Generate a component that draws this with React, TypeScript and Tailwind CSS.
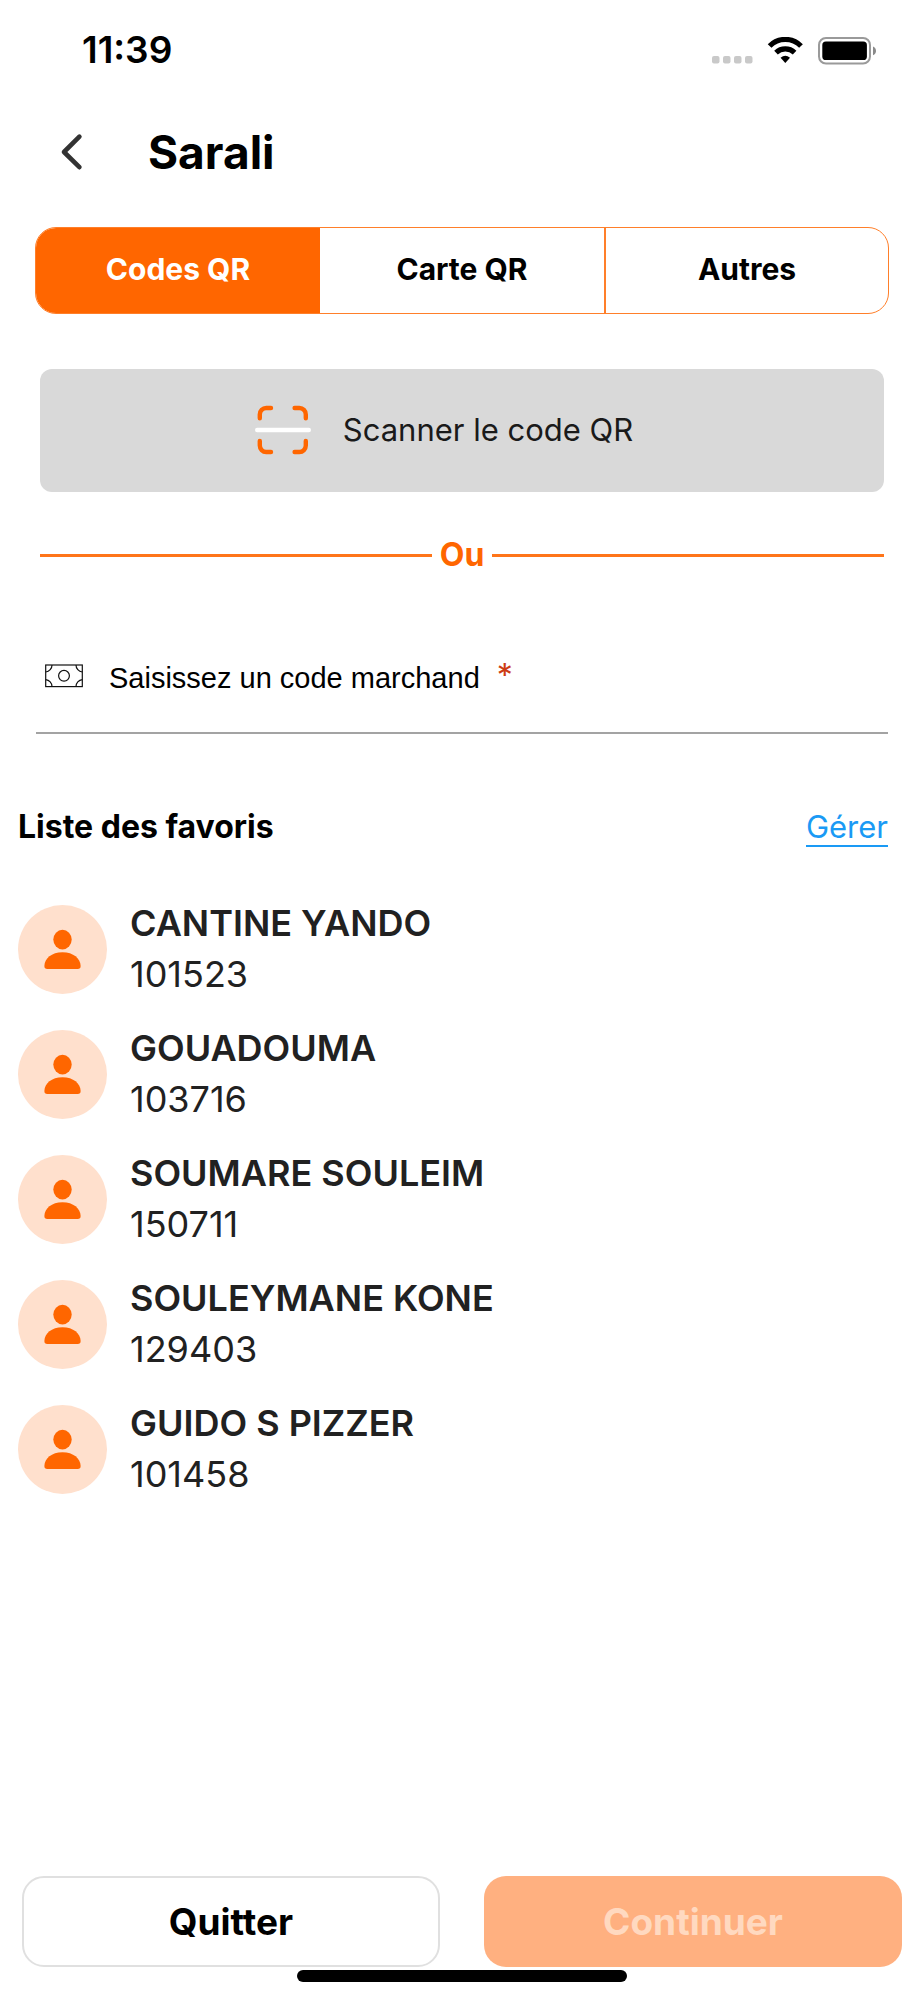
import React, { useState } from "react";

const tabs = ["Codes QR", "Carte QR", "Autres"];

const favorites = [
  { name: "CANTINE YANDO", code: "101523" },
  { name: "GOUADOUMA", code: "103716" },
  { name: "SOUMARE SOULEIM", code: "150711" },
  { name: "SOULEYMANE KONE", code: "129403" },
  { name: "GUIDO S PIZZER", code: "101458" },
];

const StatusBar: React.FC = () => (
  <div className="flex h-[100px] items-center justify-between pl-[82px] pr-12">
    <span className="text-[37px] leading-10 font-semibold">11:39</span>
    <div className="flex items-center pt-[2px]">
      <svg width="164" height="28" viewBox="0 0 164 28" aria-hidden="true">
        <g fill="#c9c9c9">
          <rect x="0" y="19" width="7.5" height="7.5" rx="2" />
          <rect x="11" y="19" width="7.5" height="7.5" rx="2" />
          <rect x="22" y="19" width="7.5" height="7.5" rx="2" />
          <rect x="33" y="19" width="7.5" height="7.5" rx="2" />
        </g>
        <g fill="none" stroke="#000" strokeWidth="5.2">
          <path d="M57.6 9 A22 22 0 0 1 89 9" />
          <path d="M64 15.6 A13.4 13.4 0 0 1 82.6 15.6" />
        </g>
        <path d="M68.6 20.8 A7.4 7.4 0 0 1 78 20.8 L73.3 26 Z" fill="#000" />
        <rect x="107" y="1" width="51" height="25.5" rx="7" fill="none" stroke="#9a9a9a" strokeWidth="2" />
        <rect x="110.3" y="4.4" width="44.6" height="18.6" rx="3.6" fill="#000" />
        <path d="M161 9.6 C165 11.4 165 16.4 161 18.2 Z" fill="#8a8a8a" />
      </svg>
    </div>
  </div>
);

const ScanIcon: React.FC = () => (
  <svg width="56" height="50" viewBox="0 0 56 50" fill="none" strokeWidth="4.4" strokeLinecap="round" aria-hidden="true">
    <g stroke="#ff6600">
      <path d="M4.8 13.2 V9.4 A6.4 6.4 0 0 1 11.2 3 H16" />
      <path d="M39.6 3 H44.4 A6.4 6.4 0 0 1 50.8 9.4 V13.2" />
      <path d="M4.8 36 V40.6 A6.4 6.4 0 0 0 11.2 47 H16" />
      <path d="M39.6 47 H44.4 A6.4 6.4 0 0 0 50.8 40.6 V36" />
    </g>
    <path d="M2.2 25 H53.8" stroke="#fff" />
  </svg>
);

const MoneyIcon: React.FC = () => (
  <svg width="38" height="24" viewBox="0 0 38 24" fill="none" stroke="#111" strokeWidth="1.2" aria-hidden="true">
    <rect x="0.7" y="1" width="36.6" height="21.6" />
    <circle cx="19" cy="11.8" r="5.4" />
    <path d="M7 1 A7 7 0 0 1 0.7 8 M31 1 A7 7 0 0 0 37.3 8 M7 22.6 A7 7 0 0 0 0.7 15.6 M31 22.6 A7 7 0 0 1 37.3 15.6" />
  </svg>
);

const Avatar: React.FC = () => (
  <svg className="shrink-0" width="89" height="89" viewBox="0 0 89 89" aria-hidden="true">
    <circle cx="44.5" cy="44.5" r="44.5" fill="#ffe0cd" />
    <ellipse cx="44.5" cy="34.6" rx="9.2" ry="9.8" fill="#ff6600" />
    <path
      d="M26.4 61 C26.4 53.6 33.6 47.2 44.5 47.2 S62.6 53.6 62.6 61 C62.6 63.2 61.6 64 59.8 64 H29.2 C27.4 64 26.4 63.2 26.4 61 Z"
      fill="#ff6600"
    />
  </svg>
);

const App: React.FC = () => {
  const [activeTab, setActiveTab] = useState("Codes QR");
  const [code, setCode] = useState("");

  return (
    <div className="flex min-h-screen flex-col bg-white font-['Inter',sans-serif] text-black">
      <StatusBar />

      {/* Header */}
      <header className="flex h-[104px] items-center pl-[56px]">
        <button type="button" aria-label="Retour" className="flex w-[92px] items-center">
          <svg width="32" height="40" viewBox="0 0 32 40" fill="none" stroke="#333" strokeWidth="4.6" strokeLinecap="round" strokeLinejoin="round">
            <path d="M23.4 4.6 L8 20 L23.4 35.2" />
          </svg>
        </button>
        <h1 className="text-[46px] leading-[52px] font-bold">Sarali</h1>
      </header>

      {/* Tabs */}
      <div className="px-[35px] pt-[23px]">
        <div role="tablist" className="grid h-[87px] grid-cols-3 overflow-hidden rounded-[21px] border border-[#ff7f2a]">
          {tabs.map((tab) => (
            <button
              key={tab}
              type="button"
              role="tab"
              aria-selected={activeTab === tab}
              onClick={() => setActiveTab(tab)}
              className={
                activeTab === tab
                  ? "border-[#ff7f2a] bg-[#ff6600] pb-1 text-[30px] leading-9 font-bold text-white last:border-l-2"
                  : "border-[#ff7f2a] pb-1 text-[30px] leading-9 font-bold last:border-l-2"
              }
            >
              {tab}
            </button>
          ))}
        </div>
      </div>

      {/* Scanner */}
      <div className="px-10 pt-[55px]">
        <button
          type="button"
          className="flex h-[123px] w-full items-center justify-center gap-8 rounded-xl bg-[#d9d9d9] pr-9 pb-[2px] text-[31px] leading-9 text-[#1a1a1a]"
        >
          <ScanIcon />
          <span>Scanner le code QR</span>
        </button>
        <div className="flex items-center gap-2 pt-[45px]">
          <div className="h-[3px] flex-1 bg-[#ff7519]"></div>
          <span className="text-[32px] leading-9 font-bold text-[#ff6600]">Ou</span>
          <div className="h-[3px] flex-1 bg-[#ff7519]"></div>
        </div>
      </div>

      {/* Code marchand */}
      <div className="px-9 pt-[73px]">
        <div className="flex h-[88px] items-start border-b-2 border-[#a3a3a3] pt-[14px] pl-[9px]">
          <div className="flex h-8 items-center">
            <MoneyIcon />
          </div>
          <label
            htmlFor="code-marchand"
            className="flex pl-[26px] font-['Liberation_Sans',sans-serif] text-[29px] leading-9"
          >
            Saisissez un code marchand
            <span className="pl-[17px] font-['Inter',sans-serif] text-[32px] leading-8 text-[#cd3c14]">*</span>
          </label>
          <input
            id="code-marchand"
            type="text"
            inputMode="numeric"
            value={code}
            onChange={(e) => setCode(e.target.value)}
            className="h-9 min-w-0 flex-1 pl-3 text-[29px] outline-none"
          />
        </div>
      </div>

      {/* Favoris */}
      <section className="pt-[73px] pr-9 pl-[18px]">
        <div className="flex items-start justify-between">
          <h2 className="text-[32px] leading-10 font-bold">Liste des favoris</h2>
          <a href="#gerer" className="border-b-2 border-[#1a9af5] pt-[2px] text-[31px] leading-9 text-[#1a9af5]">
            Gérer
          </a>
        </div>
        <ul className="flex flex-col gap-9 pt-[58px]">
          {favorites.map((fav) => (
            <li key={fav.code} className="flex h-[89px] items-center gap-[23px]">
              <Avatar />
              <div className="pb-[2px] text-[36px] text-[#212121]">
                <p className="leading-[51px] font-semibold">{fav.name}</p>
                <p className="leading-[51px]">{fav.code}</p>
              </div>
            </li>
          ))}
        </ul>
      </section>

      {/* Actions */}
      <footer className="mt-auto pb-[18px]">
        <div className="grid grid-cols-2 gap-11 px-[22px]">
          <button
            type="button"
            className="h-[91px] rounded-[22px] border-2 border-[#e0e0e0] text-[37px] leading-10 font-bold"
          >
            Quitter
          </button>
          <button
            type="button"
            disabled
            className="h-[91px] rounded-[22px] bg-[#ffb080] text-[37px] leading-10 font-bold text-[#ffd9c0]"
          >
            Continuer
          </button>
        </div>
        <div className="mx-auto mt-[3px] h-3 w-[330px] rounded-full bg-black"></div>
      </footer>
    </div>
  );
};

export default App;
